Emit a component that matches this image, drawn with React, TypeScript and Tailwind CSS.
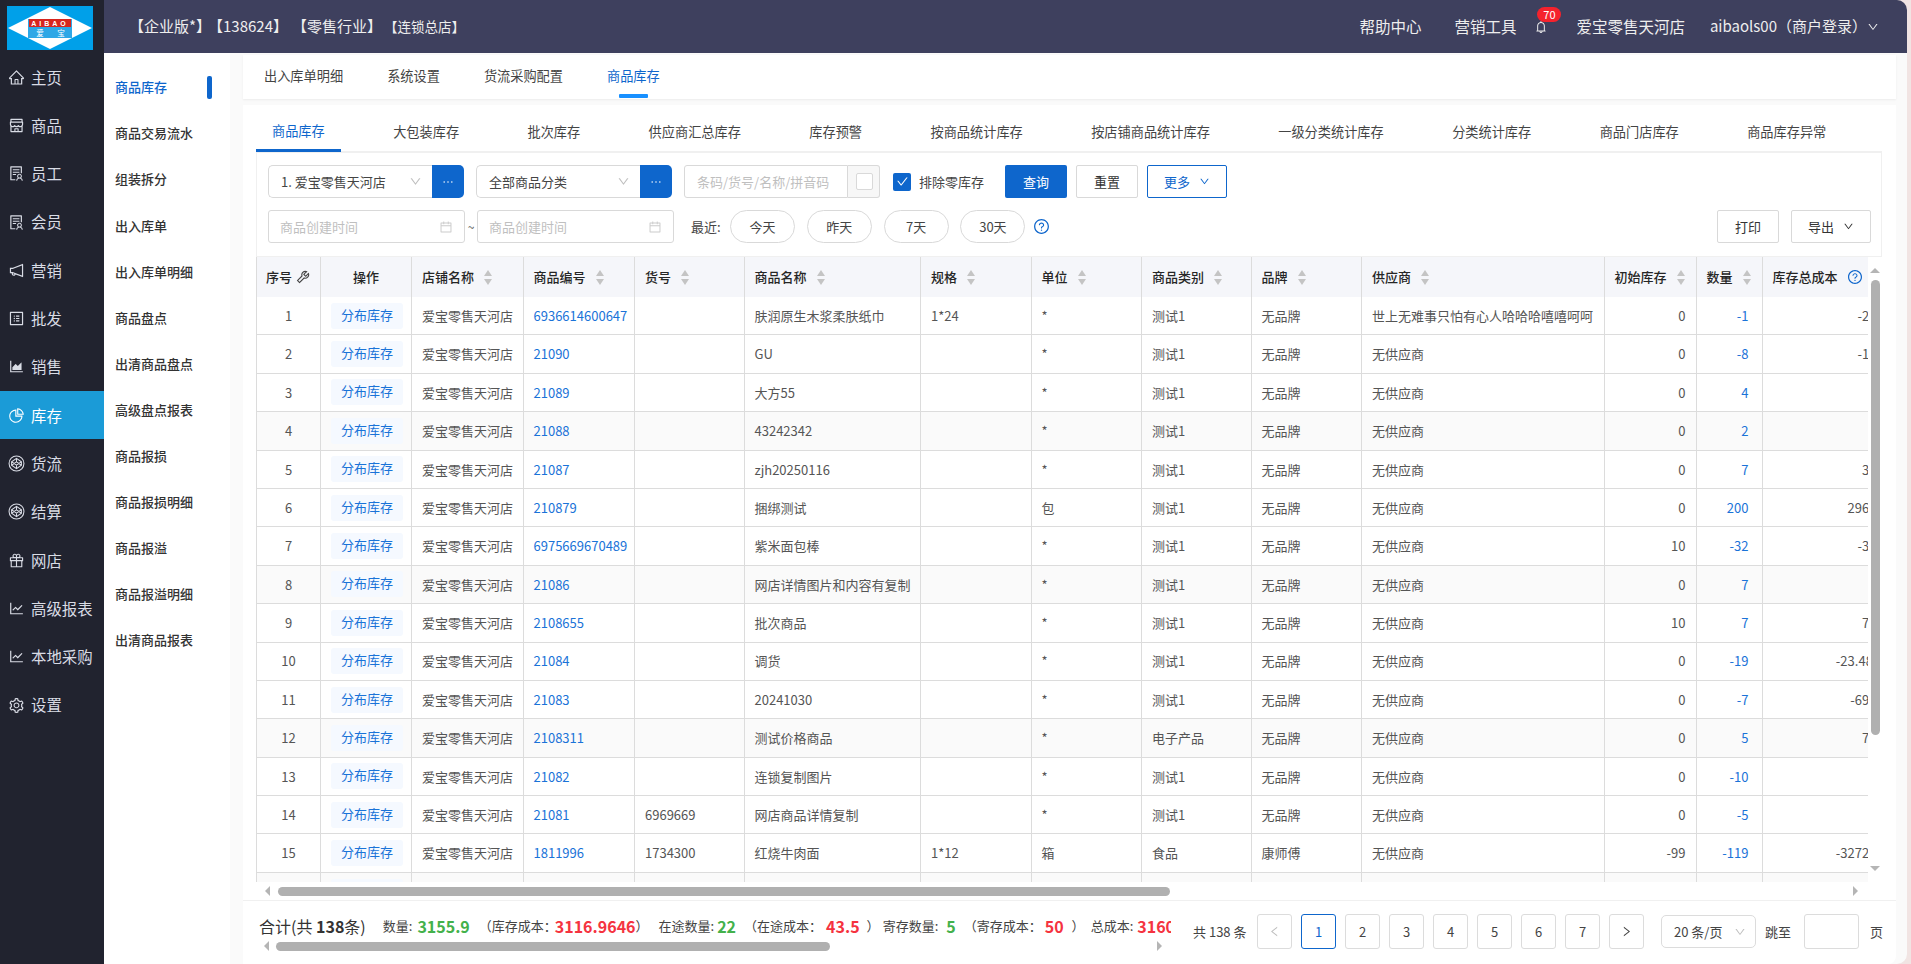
import React from 'react';
import {
  AiOutlineHome, AiOutlineShop, AiOutlineSolution, AiOutlineNotification, AiOutlineProfile,
  AiOutlineAreaChart, AiOutlinePieChart, AiOutlineGift, AiOutlineLineChart,
  AiOutlineSetting, AiOutlineTool, AiOutlineQuestionCircle, AiOutlineBell, AiOutlineDown,
  AiOutlineCalendar, AiOutlineLeft, AiOutlineRight, AiOutlineEllipsis, AiOutlineCheck,
} from 'react-icons/ai';

const CubeCircle = ({ className }: { className?: string }) => (
  <svg viewBox="0 0 16 16" fill="none" stroke="currentColor" strokeWidth="1" className={className}>
    <circle cx="8" cy="8" r="7" />
    <path d="M8 3.2 12.6 6.4V9.6L8 12.8 3.4 9.6V6.4Z" />
    <path d="M8 3.2V6M8 10v2.8M3.4 6.4 8 9.6l4.6-3.2M3.4 9.6 8 6.4l4.6 3.2" />
  </svg>
);

const menu = [
  { name: '主页', Icon: AiOutlineHome },
  { name: '商品', Icon: AiOutlineShop },
  { name: '员工', Icon: AiOutlineSolution },
  { name: '会员', Icon: AiOutlineSolution },
  { name: '营销', Icon: AiOutlineNotification },
  { name: '批发', Icon: AiOutlineProfile },
  { name: '销售', Icon: AiOutlineAreaChart },
  { name: '库存', Icon: AiOutlinePieChart, active: true },
  { name: '货流', Icon: CubeCircle },
  { name: '结算', Icon: CubeCircle },
  { name: '网店', Icon: AiOutlineGift },
  { name: '高级报表', Icon: AiOutlineLineChart },
  { name: '本地采购', Icon: AiOutlineLineChart },
  { name: '设置', Icon: AiOutlineSetting },
];

const subMenu = [
  '商品库存', '商品交易流水', '组装拆分', '出入库单', '出入库单明细', '商品盘点', '出清商品盘点',
  '高级盘点报表', '商品报损', '商品报损明细', '商品报溢', '商品报溢明细', '出清商品报表',
];

const stockTabs = [
  '商品库存', '大包装库存', '批次库存', '供应商汇总库存', '库存预警', '按商品统计库存',
  '按店铺商品统计库存', '一级分类统计库存', '分类统计库存', '商品门店库存', '商品库存异常',
];

const columns = [
  { title: '序号', width: 65 },
  { title: '操作', width: 91 },
  { title: '店铺名称', width: 111.5, sort: true },
  { title: '商品编号', width: 111.5, sort: true },
  { title: '货号', width: 109.5, sort: true },
  { title: '商品名称', width: 176.5, sort: true },
  { title: '规格', width: 110.5, sort: true },
  { title: '单位', width: 110.5, sort: true },
  { title: '商品类别', width: 109.5, sort: true },
  { title: '品牌', width: 110.5, sort: true },
  { title: '供应商', width: 242.5, sort: true },
  { title: '初始库存', width: 92, sort: true },
  { title: '数量', width: 66, sort: true },
  { title: '库存总成本', width: 141 },
];

type Row = {
  code: string; sku?: string; name: string; spec?: string; unit?: string; cat?: string;
  brand?: string; sup?: string; init: string; qty: string; cost: string;
};

const rows: Row[] = [
  { code: '6936614600647', name: '肤润原生木浆柔肤纸巾', spec: '1*24', sup: '世上无难事只怕有心人哈哈哈嘻嘻呵呵', init: '0', qty: '-1', cost: '-2.600' },
  { code: '21090', name: 'GU', init: '0', qty: '-8', cost: '-1.600' },
  { code: '21089', name: '大方55', init: '0', qty: '4', cost: '4.00' },
  { code: '21088', name: '43242342', init: '0', qty: '2', cost: '2.00' },
  { code: '21087', name: 'zjh20250116', init: '0', qty: '7', cost: '3.500' },
  { code: '210879', name: '捆绑测试', unit: '包', init: '0', qty: '200', cost: '296.000' },
  { code: '6975669670489', name: '紫米面包棒', init: '10', qty: '-32', cost: '-3.200' },
  { code: '21086', name: '网店详情图片和内容有复制', init: '0', qty: '7', cost: '5.00' },
  { code: '2108655', name: '批次商品', init: '10', qty: '7', cost: '7.500' },
  { code: '21084', name: '调货', init: '0', qty: '-19', cost: '-23.48000' },
  { code: '21083', name: '20241030', init: '0', qty: '-7', cost: '-69.000' },
  { code: '2108311', name: '测试价格商品', cat: '电子产品', init: '0', qty: '5', cost: '7.500' },
  { code: '21082', name: '连锁复制图片', init: '0', qty: '-10', cost: '5.00' },
  { code: '21081', sku: '6969669', name: '网店商品详情复制', init: '0', qty: '-5', cost: '3.00' },
  { code: '1811996', sku: '1734300', name: '红烧牛肉面', spec: '1*12', unit: '箱', cat: '食品', brand: '康师傅', init: '-99', qty: '-119', cost: '-3272.000' },
  { code: '', name: '', init: '', qty: '', cost: '' },
];

const SortIcon = () => (
  <svg width="8" height="15" viewBox="0 0 8 15" className="shrink-0 ml-[10px]" fill="#c4c4c4">
    <path d="M4 0 8 6H0z" />
    <path d="M0 9h8l-4 6z" />
  </svg>
);

const Logo = () => (
  <svg width="86" height="44" viewBox="0 0 86 44">
    <rect width="86" height="44" fill="#00a0e9" />
    <path d="M1 22 43 1l42 21-42 21z" fill="#fff" />
    <rect x="21" y="13" width="44" height="19" fill="#2ea7e6" />
    <rect x="22" y="13" width="42" height="8" fill="#d7261e" />
    <text x="43" y="19.6" textAnchor="middle" fontSize="7" fontWeight="700" fill="#fff" letterSpacing="3" fontFamily="'Liberation Sans', sans-serif">AIBAO</text>
    <text x="33" y="30" textAnchor="middle" fontSize="7.5" fill="#fff" fontFamily="'Noto Sans CJK SC', sans-serif">爱</text>
    <text x="54" y="30" textAnchor="middle" fontSize="7.5" fill="#fff" fontFamily="'Noto Sans CJK SC', sans-serif">宝</text>
  </svg>
);

const Sidebar = () => (
  <aside className="w-[104px] shrink-0 bg-[#21232f] flex flex-col">
    <div className="h-[53px] shrink-0 pl-[7px] pt-[6px]">
      <Logo />
    </div>
    {menu.map(({ name, Icon, active }) => (
      <div
        key={name}
        className={`h-[48.3px] shrink-0 flex items-center pl-[8px] text-[15.4px] ${active ? 'bg-[#1b9bd7] text-white' : 'text-[#d9dce5]'}`}
      >
        <Icon className="w-[17px] h-[17px] mr-[6px] shrink-0" />
        {name}
      </div>
    ))}
  </aside>
);

const SubNav = () => (
  <nav className="w-[126px] shrink-0 bg-white flex flex-col pt-[11px]">
    {subMenu.map((name, i) => (
      <div key={name} className="h-[46.1px] shrink-0 flex items-center pl-[11px] pr-[18px] justify-between">
        <span className={`text-[13px] font-medium ${i === 0 ? 'text-[#0e66cc]' : 'text-[#333333]'}`}>{name}</span>
        {i === 0 && <span className="w-[5px] h-[23px] rounded-[2px] bg-[#0e66cc]" />}
      </div>
    ))}
  </nav>
);

const SelectBox = ({ label }: { label: string }) => (
  <div className="flex h-[33px] w-[196px]">
    <div className="flex-1 flex items-center justify-between border border-[#d9d9d9] border-r-0 rounded-l-[5px] pl-[12px] pr-[10px]">
      <span className="text-[13px] text-[#444444]">{label}</span>
      <AiOutlineDown className="w-[13px] h-[13px] text-[#bfbfbf]" />
    </div>
    <div className="w-[32px] bg-[#0e66cc] rounded-r-[5px] flex items-center justify-center text-white">
      <AiOutlineEllipsis className="w-[14px] h-[14px]" />
    </div>
  </div>
);

const DateInput = () => (
  <div className="w-[197px] h-[33px] border border-[#d9d9d9] rounded-[3px] flex items-center justify-between pl-[11px] pr-[11px]">
    <span className="text-[13px] text-[#bfbfbf]">商品创建时间</span>
    <AiOutlineCalendar className="w-[14px] h-[14px] text-[#cccccc]" />
  </div>
);

const Filters = () => (
  <div className="h-[104px] shrink-0 border border-t-0 border-[#f0f0f0] pl-[11px] pr-[10px] pt-[12px] flex flex-col gap-[12px]">
    <div className="flex items-center h-[33px]">
      <SelectBox label="1. 爱宝零售天河店" />
      <div className="ml-[12px]"><SelectBox label="全部商品分类" /></div>
      <div className="ml-[12px] flex h-[33px] w-[196px]">
        <div className="w-[164px] border border-[#d9d9d9] rounded-l-[3px] flex items-center pl-[12px] text-[13px] text-[#bfbfbf]">条码/货号/名称/拼音码</div>
        <div className="flex-1 bg-[#f7f7f7] border border-l-0 border-[#d9d9d9] rounded-r-[3px] flex items-center pl-[8px]">
          <span className="w-[17px] h-[17px] bg-white border border-[#d9d9d9] rounded-[2px]" />
        </div>
      </div>
      <span className="ml-[13px] w-[18px] h-[18px] rounded-[2px] bg-[#0e66cc] flex items-center justify-center text-white">
        <AiOutlineCheck className="w-[13px] h-[13px]" />
      </span>
      <span className="ml-[8px] text-[13px] text-[#444444]">排除零库存</span>
      <button className="ml-[21px] w-[62px] h-[33px] rounded-[2px] bg-[#0e66cc] text-white text-[13px]">查询</button>
      <button className="ml-[9px] w-[62px] h-[33px] rounded-[2px] border border-[#d9d9d9] text-[#333333] text-[13px]">重置</button>
      <button className="ml-[9px] w-[80px] h-[33px] rounded-[2px] border border-[#0e66cc] text-[#0e66cc] text-[13px] flex items-center justify-center gap-[9px]">
        更多<AiOutlineDown className="w-[11px] h-[11px]" />
      </button>
    </div>
    <div className="flex items-center h-[33px]">
      <DateInput />
      <span className="w-[12px] text-center text-[12px] text-[#555555]">~</span>
      <DateInput />
      <span className="ml-[17px] w-[39px] text-[13px] text-[#444444]">最近:</span>
      <div className="flex gap-[11.8px]">
        {['今天', '昨天', '7天', '30天'].map(t => (
          <button key={t} className="w-[65px] h-[33px] rounded-[17px] border border-[#d9d9d9] text-[13px] text-[#444444]">{t}</button>
        ))}
      </div>
      <AiOutlineQuestionCircle className="ml-[8px] w-[17px] h-[17px] text-[#0e66cc]" />
      <button className="ml-auto w-[62px] h-[33px] rounded-[2px] border border-[#d9d9d9] text-[13px] text-[#333333]">打印</button>
      <button className="ml-[12px] w-[80px] h-[33px] rounded-[2px] border border-[#d9d9d9] text-[13px] text-[#333333] flex items-center justify-center gap-[9px]">
        导出<AiOutlineDown className="w-[11px] h-[11px]" />
      </button>
    </div>
  </div>
);

const tdBase = 'border-b border-r border-[#dcdcdc] px-[10px] whitespace-nowrap overflow-hidden text-[13px]';
const plain = 'text-[#555555]';
const link = 'text-[#1a73d8]';

const StockTable = () => (
  <table className="border-separate border-spacing-0 table-fixed w-[1647px] shrink-0">
    <colgroup>
      {columns.map(c => <col key={c.title} style={{ width: c.width }} />)}
    </colgroup>
    <thead>
      <tr className="h-[40px] bg-[#f5f6fa]">
        {columns.map((c, i) => (
          <th key={c.title} className={`border-r border-[#dcdcdc] text-[13px] font-medium text-[#262626] whitespace-nowrap ${i === 0 ? 'border-l px-0' : 'px-[10px]'}`}>
            <div className={`flex items-center ${i < 2 ? 'justify-center' : ''}`}>
              {c.title}
              {c.sort && <SortIcon />}
              {i === 0 && <AiOutlineTool className="ml-[3px] w-[16px] h-[16px] text-[#444444] shrink-0" />}
              {i === columns.length - 1 && <AiOutlineQuestionCircle className="ml-[9px] w-[16px] h-[16px] text-[#0e66cc] shrink-0" />}
            </div>
          </th>
        ))}
      </tr>
    </thead>
    <tbody>
      {rows.map((r, i) => (
        <tr key={i} className={`h-[38.4px] ${(i + 1) % 4 === 0 ? 'bg-[#fafafa]' : 'bg-white'}`}>
          <td className={`${tdBase} ${plain} border-l text-center`}>{i + 1}</td>
          <td className={`${tdBase} text-center`}>
            <span className={`inline-block w-[72px] h-[26px] leading-[24px] rounded-[3px] bg-[#f5f9ff] ${link}`}>分布库存</span>
          </td>
          <td className={`${tdBase} ${plain}`}>爱宝零售天河店</td>
          <td className={`${tdBase} ${link}`}>{r.code}</td>
          <td className={`${tdBase} ${plain}`}>{r.sku}</td>
          <td className={`${tdBase} ${plain}`}>{r.name}</td>
          <td className={`${tdBase} ${plain}`}>{r.spec}</td>
          <td className={`${tdBase} ${plain}`}>{r.unit ?? '*'}</td>
          <td className={`${tdBase} ${plain}`}>{r.cat ?? '测试1'}</td>
          <td className={`${tdBase} ${plain}`}>{r.brand ?? '无品牌'}</td>
          <td className={`${tdBase} ${plain}`}>{r.sup ?? '无供应商'}</td>
          <td className={`${tdBase} ${plain} text-right`}>{r.init}</td>
          <td className={`${tdBase} ${link} !pr-[13px] text-right`}>{r.qty}</td>
          <td className={`${tdBase} ${plain} !pr-[8px] text-right`}>{r.cost}</td>
        </tr>
      ))}
    </tbody>
  </table>
);

const Triangle = ({ dir }: { dir: 'up' | 'down' | 'left' | 'right' }) => {
  const d = { up: 'M5 0l5 5H0z', down: 'M0 0h10L5 5z', left: 'M5 0v10L0 5z', right: 'M0 0l5 5-5 5z' }[dir];
  const vertical = dir === 'up' || dir === 'down';
  return (
    <svg width={vertical ? 10 : 5} height={vertical ? 5 : 10} viewBox={vertical ? '0 0 10 5' : '0 0 5 10'} fill="#b5b5b5" className="shrink-0">
      <path d={d} />
    </svg>
  );
};

const Label = ({ children, className = '' }: { children: React.ReactNode; className?: string }) => (
  <span className={`text-[13px] text-[#444444] shrink-0 ${className}`}>{children}</span>
);
const Green = ({ children, className = '' }: { children: React.ReactNode; className?: string }) => (
  <span className={`text-[16px] font-bold text-[#43b14b] shrink-0 ${className}`}>{children}</span>
);
const Red = ({ children, className = '' }: { children: React.ReactNode; className?: string }) => (
  <span className={`text-[16px] font-bold text-[#f5333f] shrink-0 ${className}`}>{children}</span>
);

const Totals = () => (
  <div className="w-[912px] shrink-0 flex flex-col overflow-hidden">
    <div className="h-[30px] mt-[10px] flex items-center whitespace-nowrap overflow-hidden">
      <span className="text-[16px] text-[#333333] shrink-0">合计(共 <b>138</b>条)</span>
      <Label className="ml-[17px]">数量:</Label><Green className="ml-[5px]">3155.9</Green>
      <Label className="ml-[9px]">（库存成本：</Label><Red className="-ml-[2px]">3116.9646</Red><Label>）</Label>
      <Label className="ml-[10px]">在途数量:</Label><Green className="ml-[3px]">22</Green>
      <Label className="ml-[8px]">（在途成本：</Label><Red className="ml-[4px]">43.5</Red><Label className="ml-[7px]">）</Label>
      <Label className="ml-[3px]">寄存数量:</Label><Green className="ml-[8px]">5</Green>
      <Label className="ml-[8px]">（寄存成本：</Label><Red className="ml-[3px]">50</Red><Label className="ml-[8px]">）</Label>
      <Label className="ml-[6px]">总成本:</Label><Red className="ml-[4px]">3160</Red>
    </div>
    <div className="h-[10px] flex items-center">
      <span className="ml-[5px]"><Triangle dir="left" /></span>
      <div className="ml-[7px] w-[554px] h-[9px] rounded-full bg-[#b0b0b0]" />
      <span className="ml-auto mr-[9px]"><Triangle dir="right" /></span>
    </div>
  </div>
);

const PageBtn = ({ children, active }: { children: React.ReactNode; active?: boolean }) => (
  <span className={`w-[35px] h-[35px] rounded-[3px] border flex items-center justify-center text-[13px] ${active ? 'border-[#0e66cc] text-[#0e66cc]' : 'border-[#dcdcdc] text-[#444444]'}`}>
    {children}
  </span>
);

const Pagination = () => (
  <div className="ml-[22px] flex items-center text-[13px] text-[#444444] whitespace-nowrap">
    <span className="w-[64px]">共 138 条</span>
    <div className="flex gap-[9px]">
      <PageBtn><AiOutlineLeft className="w-[13px] h-[13px] text-[#bfbfbf]" /></PageBtn>
      <PageBtn active>1</PageBtn>
      {[2, 3, 4, 5, 6, 7].map(n => <PageBtn key={n}>{n}</PageBtn>)}
      <PageBtn><AiOutlineRight className="w-[13px] h-[13px] text-[#444444]" /></PageBtn>
    </div>
    <div className="ml-[17px] w-[95px] h-[33px] rounded-[5px] border border-[#dcdcdc] flex items-center justify-between pl-[12px] pr-[9px]">
      20 条/页<AiOutlineDown className="w-[12px] h-[12px] text-[#bfbfbf]" />
    </div>
    <span className="ml-[9px]">跳至</span>
    <span className="ml-[13px] w-[55px] h-[35px] rounded-[3px] border border-[#dcdcdc]" />
    <span className="ml-[11px]">页</span>
  </div>
);

export default function App() {
  return (
    <div className="w-full h-screen flex overflow-hidden bg-[#f1e4e3] pr-[4px] font-['Noto_Sans_CJK_SC','Liberation_Sans',sans-serif]">
      <Sidebar />
      <div className="flex-1 min-w-0 flex flex-col">
        <header className="h-[53px] shrink-0 bg-[#3e405e] rounded-tr-[10px] flex items-center pl-[25px] pr-[28px] text-[#eeeeee]">
          <span className="text-[15px] -mr-[3px]">【企业版*】</span>
          <span className="text-[15px] mr-[4px]">【138624】</span>
          <span className="text-[15px] mr-[2px]">【零售行业】</span>
          <span className="text-[13.5px]">【连锁总店】</span>
          <span className="ml-auto text-[15.5px]">帮助中心</span>
          <span className="ml-[33px] text-[15.5px]">营销工具</span>
          <span className="relative ml-[18px] w-[14px] flex">
            <AiOutlineBell className="w-[15px] h-[16px]" />
            <span className="absolute -top-[12px] left-[3px] w-[24px] h-[15px] rounded-full bg-[#f5222d] text-white text-[11px] leading-[15px] text-center">70</span>
          </span>
          <span className="ml-[28px] text-[15.5px]">爱宝零售天河店</span>
          <span className="ml-[25px] text-[15px]">aibaols00（商户登录）</span>
          <AiOutlineDown className="w-[12px] h-[12px]" />
        </header>
        <div className="flex-1 min-h-0 flex bg-[#fafafa] rounded-br-[10px]">
          <SubNav />
          <div className="flex-1 min-w-0 flex flex-col pl-[13px] pr-[11px]">
            <div className="mt-[2px] h-[44px] shrink-0 bg-white shadow-[0_1px_2px_rgba(0,0,0,0.06)] flex pl-[21px] text-[13.2px] text-[#444444] gap-[44px]">
              <span className="h-full pb-[2px] flex items-center">出入库单明细</span>
              <span className="h-full pb-[2px] flex items-center">系统设置</span>
              <span className="h-full pb-[2px] flex items-center">货流采购配置</span>
              <span className="h-full pb-[2px] flex flex-col items-center justify-center relative text-[#0e66cc]">
                商品库存
                <span className="absolute bottom-[1px] w-[29px] h-[4px] rounded-[1px] bg-[#1890ff]" />
              </span>
            </div>
            <main className="mt-[6px] flex-1 min-h-0 bg-white rounded-br-[8px] flex flex-col">
              <div className="h-[48px] shrink-0 ml-[13px] mr-[14px] flex border-b-[2px] border-[#f0f0f0] gap-[36.4px] text-[13.2px] text-[#444444]">
                {stockTabs.map((t, i) => (
                  <span key={t} className={`px-[16px] h-[47px] pt-[7px] flex items-center ${i === 0 ? 'text-[#0e66cc] border-b-[3px] border-[#0e66cc] -mb-[1px]' : ''}`}>{t}</span>
                ))}
              </div>
              <div className="ml-[13px] mr-[14px] flex flex-col shrink-0">
                <Filters />
                <div className="flex h-[625px]">
                  <div className="w-[1612px] overflow-hidden">
                    <StockTable />
                  </div>
                  <div className="flex-1 flex flex-col items-center pt-[11px] pb-[11px]">
                    <Triangle dir="up" />
                    <div className="mt-[7px] w-[9px] h-[455px] rounded-full bg-[#b0b0b0]" />
                    <div className="mt-auto"><Triangle dir="down" /></div>
                  </div>
                </div>
              </div>
              <div className="h-[18px] shrink-0 ml-[13px] mr-[14px] flex items-center">
                <span className="ml-[9px]"><Triangle dir="left" /></span>
                <div className="ml-[8px] w-[892px] h-[9px] rounded-full bg-[#b0b0b0]" />
                <span className="ml-auto mr-[24px]"><Triangle dir="right" /></span>
              </div>
              <footer className="flex-1 min-h-0 border-t border-[#f0f0f0] flex items-start pl-[16px]">
                <Totals />
                <div className="pt-[13px] flex">
                  <Pagination />
                </div>
              </footer>
            </main>
          </div>
        </div>
      </div>
    </div>
  );
}
